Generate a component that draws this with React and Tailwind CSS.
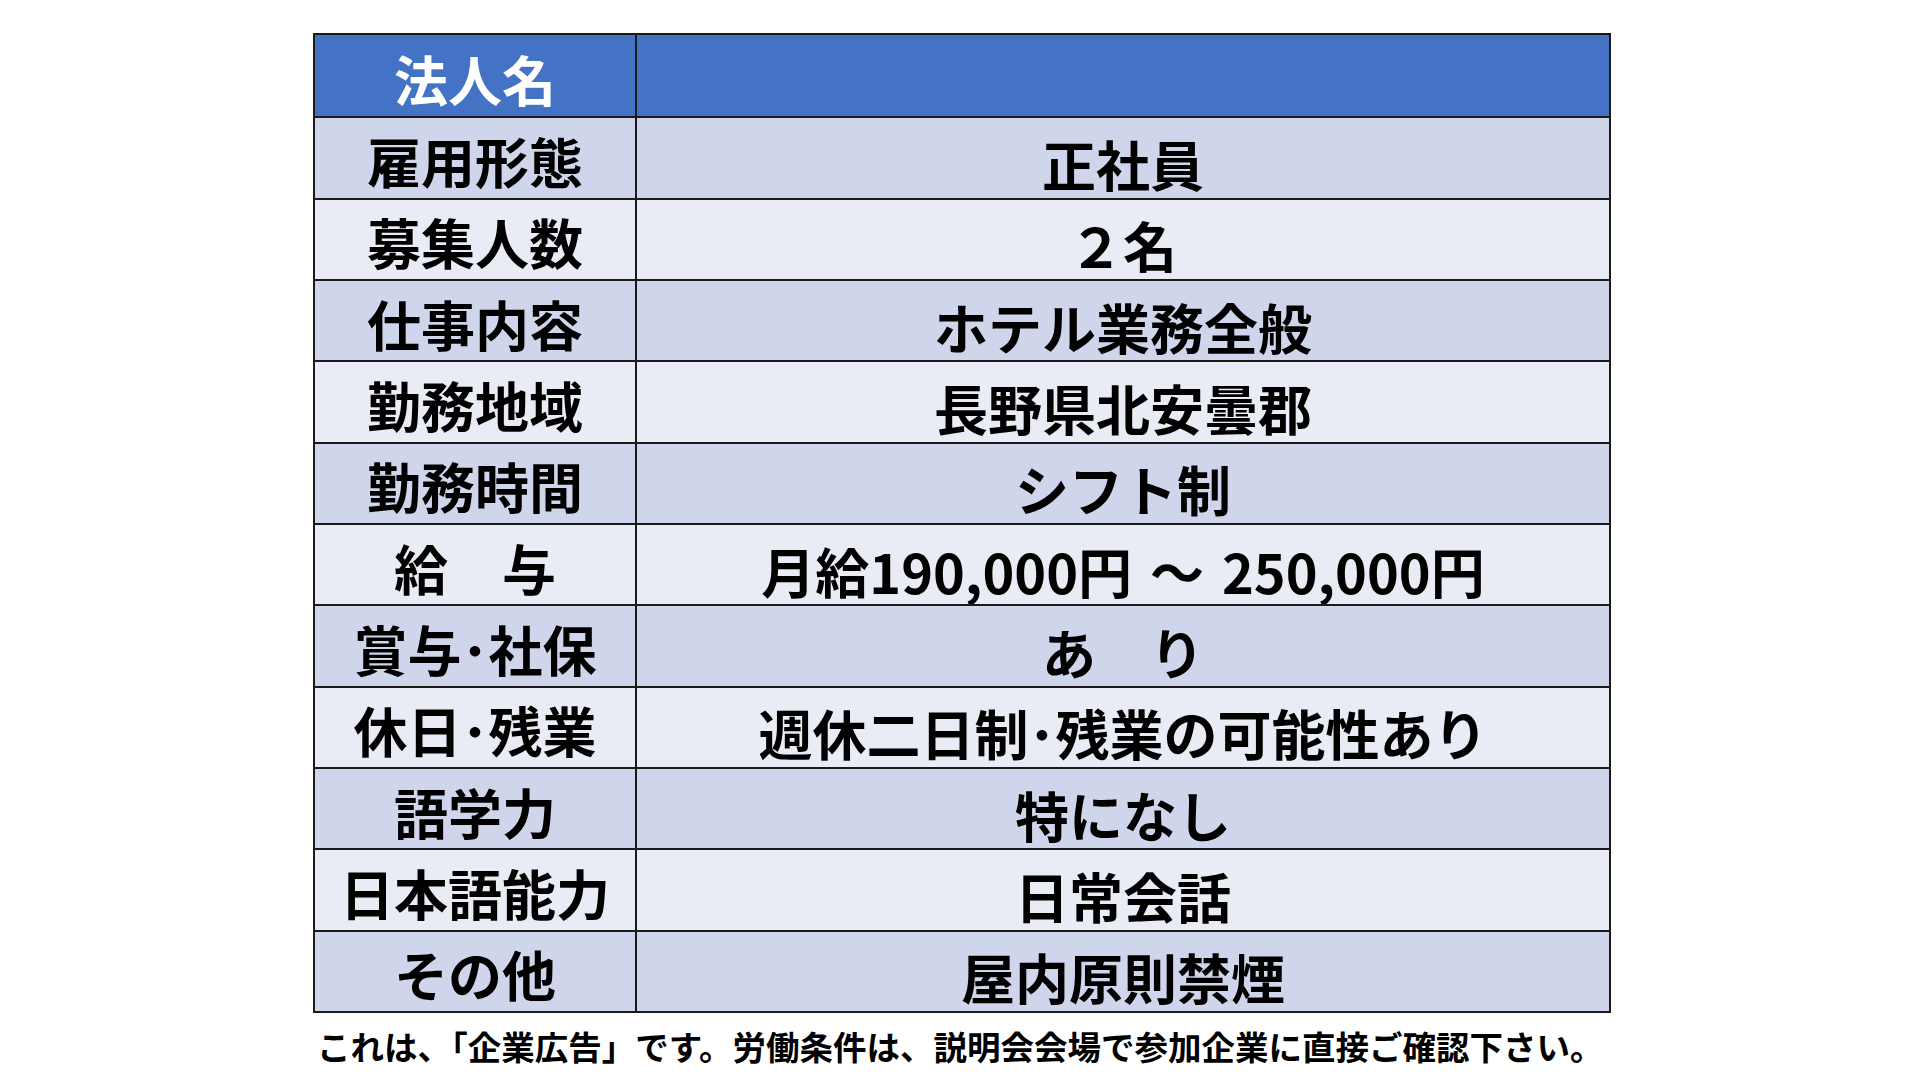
import React from "react";

const rows = [
  { label: "雇用形態", value: "正社員" },
  { label: "募集人数", value: "２名" },
  { label: "仕事内容", value: "ホテル業務全般" },
  { label: "勤務地域", value: "長野県北安曇郡" },
  { label: "勤務時間", value: "シフト制" },
  { label: "給　与", value: "月給190,000円\u2004～\u2004250,000円" },
  { label: "賞与･社保", value: "あ　り" },
  { label: "休日･残業", value: "週休二日制･残業の可能性あり" },
  { label: "語学力", value: "特になし" },
  { label: "日本語能力", value: "日常会話" },
  { label: "その他", value: "屋内原則禁煙" },
];

const font = {
  fontFamily: '"Noto Sans CJK JP", "Noto Sans", sans-serif',
};

const App = () => {
  return (
    <div className="min-h-screen w-full bg-white" style={font}>
      <div className="ml-[313px] pt-[33px] w-[1298px]">
        {/* Table */}
        <div className="grid grid-rows-12 h-[980px] border-2 border-[#1a1a1a]">
          {/* Header row */}
          <div className="grid grid-cols-[322px_1fr] bg-[#4472c4]">
            <div className="flex items-center justify-center border-r-2 border-[#1a1a1a] pt-[6px] text-[54px] font-bold leading-none text-white">
              法人名
            </div>
            <div />
          </div>

          {rows.map((row, i) => (
            <div
              key={row.label}
              className={
                "grid grid-cols-[322px_1fr] border-t-2 border-[#1a1a1a] " +
                (i % 2 === 0 ? "bg-[#cfd5ea]" : "bg-[#e9ebf5]")
              }
            >
              <div className="flex items-center justify-center border-r-2 border-[#1a1a1a] pt-[6px] text-[54px] font-bold leading-none text-black whitespace-pre">
                {row.label}
              </div>
              <div className="flex items-center justify-center pt-[12px] text-[54px] font-bold leading-none text-black whitespace-pre">
                {row.value}
              </div>
            </div>
          ))}
        </div>

        {/* Footnote */}
        <p className="mt-[14px] pl-[4px] text-[33.5px] font-bold leading-[38px] text-black whitespace-nowrap">
          これは、「企業広告」です。労働条件は、説明会会場で参加企業に直接ご確認下さい。
        </p>
      </div>
    </div>
  );
};

export default App;
